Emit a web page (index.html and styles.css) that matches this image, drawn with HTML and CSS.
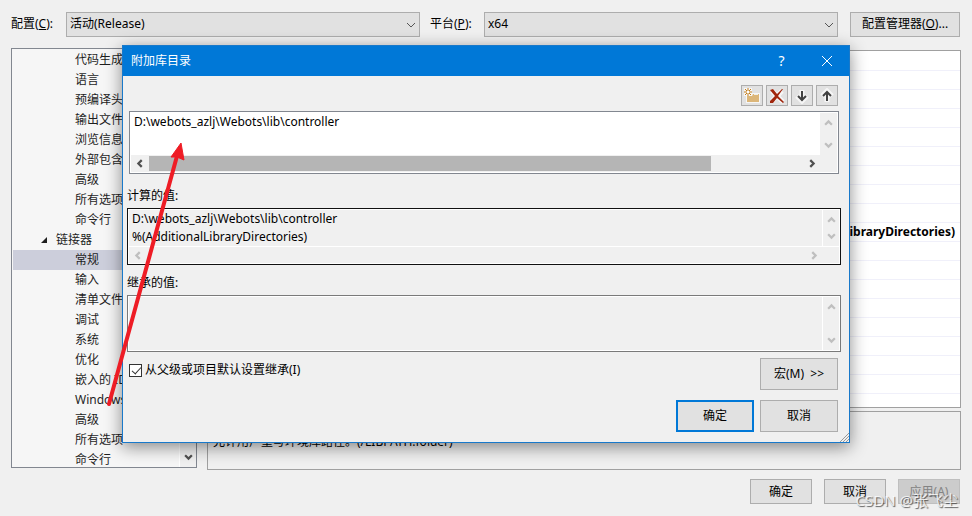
FILE: index.html
```html
<!DOCTYPE html>
<html lang="zh-CN">

<head>
    <meta charset="UTF-8" />
    <title>属性页</title>
    <link rel="stylesheet" href="styles.css">
</head>

<body>
    <header class="config-bar">
        <label class="config-label" for="config">配置(<u>C</u>):</label>
        <div class="select-wrap">
            <select id="config">
                <option>活动(Release)</option>
            </select>
            <svg class="chevron" viewBox="0 0 10 6"><path d="M1 1l4 4 4-4" /></svg>
        </div>
        <label class="platform-label" for="platform">平台(<u>P</u>):</label>
        <div class="select-wrap">
            <select id="platform">
                <option>x64</option>
            </select>
            <svg class="chevron" viewBox="0 0 10 6"><path d="M1 1l4 4 4-4" /></svg>
        </div>
        <button class="manager-btn">配置管理器(<u>O</u>)...</button>
    </header>

    <main class="content">
        <nav class="tree">
            <ul>
                <li>代码生成</li>
                <li>语言</li>
                <li>预编译头</li>
                <li>输出文件</li>
                <li>浏览信息</li>
                <li>外部包含</li>
                <li>高级</li>
                <li>所有选项</li>
                <li>命令行</li>
                <li class="parent"><svg viewBox="0 0 6 6"><path d="M6 0v6H0z" /></svg>链接器</li>
                <li class="selected">常规</li>
                <li>输入</li>
                <li>清单文件</li>
                <li>调试</li>
                <li>系统</li>
                <li>优化</li>
                <li>嵌入的 IDL</li>
                <li>Windows</li>
                <li>高级</li>
                <li>所有选项</li>
                <li>命令行</li>
            </ul>
            <div class="tree-scroll">
                <svg class="arrow dark" viewBox="0 0 8 6"><path d="M1 1l3 3 3-3" /></svg>
            </div>
        </nav>

        <section class="properties">
            <div class="grid">
                <table>
                    <tr><td></td></tr>
                    <tr><td></td></tr>
                    <tr><td></td></tr>
                    <tr><td></td></tr>
                    <tr><td></td></tr>
                    <tr><td></td></tr>
                    <tr><td></td></tr>
                    <tr><td></td></tr>
                    <tr><td></td></tr>
                    <tr><td>%(AdditionalLibraryDirectories)</td></tr>
                    <tr><td></td></tr>
                    <tr><td></td></tr>
                    <tr><td></td></tr>
                    <tr><td></td></tr>
                    <tr><td></td></tr>
                    <tr><td></td></tr>
                    <tr><td></td></tr>
                    <tr><td></td></tr>
                </table>
            </div>
            <div class="description">允许用户重写环境库路径。(/LIBPATH:folder)</div>
        </section>
    </main>

    <footer class="page-buttons">
        <button>确定</button>
        <button>取消</button>
        <button disabled>应用(A)</button>
    </footer>

    <div class="dialog" role="dialog" aria-labelledby="dialog-title">
        <div class="title-bar">
            <span id="dialog-title">附加库目录</span>
            <button aria-label="帮助">?</button>
            <button aria-label="关闭">
                <svg width="12" height="12" viewBox="0 0 12 12"><path d="M1 1l10 10M11 1L1 11" /></svg>
            </button>
        </div>

        <div class="dialog-body">
            <div class="toolbar">
                <button aria-label="新行">
                    <svg width="16" height="16" viewBox="0 0 16 16">
                        <path class="halo" d="M0 0h8v5h8v10H2V8H0z" />
                        <path fill="#dcb679" d="M3 8h5l1-2h6v8H3z" />
                        <path fill="#f0efe8" d="M10 6h4v1h-4z" />
                        <path stroke="#c27d1a" d="M4 0v8M0 4h8M1 1l6 6M7 1L1 7" />
                        <path fill="#fff" d="M3 3h2v2H3z" />
                    </svg>
                </button>
                <button aria-label="删除">
                    <svg width="16" height="16" viewBox="0 0 16 16">
                        <path stroke="#f6f6f6" stroke-width="5" d="M3 3l11 11M13 3L3 13" />
                        <path fill="#a1260d" d="M1 2l3-1 4 5 5-5h1L9 8l6 6-1 1-6-5-4 5H1v-2l5-5z" />
                    </svg>
                </button>
                <button aria-label="下移">
                    <svg width="16" height="16" viewBox="0 0 16 16">
                        <path stroke="#f6f6f6" stroke-width="5" d="M8 2v11M3 8l5 5 5-5" />
                        <path stroke="#424242" stroke-width="2" d="M8 3v9M4 8l4 4 4-4" />
                    </svg>
                </button>
                <button aria-label="上移">
                    <svg width="16" height="16" viewBox="0 0 16 16">
                        <path stroke="#f6f6f6" stroke-width="5" d="M8 14V3M3 8l5-5 5 5" />
                        <path stroke="#424242" stroke-width="2" d="M8 13V4M4 8l4-4 4 4" />
                    </svg>
                </button>
            </div>

            <div class="box editable">
                <textarea aria-label="附加库目录" wrap="off">D:\webots_azlj\Webots\lib\controller</textarea>
                <div class="v-scroll">
                    <svg class="arrow" viewBox="0 0 8 6"><path d="M1 5l3-3 3 3" /></svg>
                    <svg class="arrow" viewBox="0 0 8 6"><path d="M1 1l3 3 3-3" /></svg>
                </div>
                <div class="h-scroll">
                    <svg class="arrow-h dark" viewBox="0 0 6 8"><path d="M5 1L2 4l3 3" /></svg>
                    <div class="track"><div class="thumb"></div></div>
                    <svg class="arrow-h dark" viewBox="0 0 6 8"><path d="M1 1l3 3-3 3" /></svg>
                </div>
            </div>

            <label class="box-label" for="computed">计算的值:</label>
            <div class="box computed">
                <textarea id="computed" wrap="off" readonly>D:\webots_azlj\Webots\lib\controller
%(AdditionalLibraryDirectories)</textarea>
                <div class="v-scroll">
                    <svg class="arrow" viewBox="0 0 8 6"><path d="M1 5l3-3 3 3" /></svg>
                    <svg class="arrow" viewBox="0 0 8 6"><path d="M1 1l3 3 3-3" /></svg>
                </div>
                <div class="h-scroll">
                    <svg class="arrow-h" viewBox="0 0 6 8"><path d="M5 1L2 4l3 3" /></svg>
                    <div class="track"></div>
                    <svg class="arrow-h" viewBox="0 0 6 8"><path d="M1 1l3 3-3 3" /></svg>
                </div>
            </div>

            <label class="box-label" for="inherited">继承的值:</label>
            <div class="box inherited">
                <textarea id="inherited" readonly></textarea>
                <div class="v-scroll">
                    <svg class="arrow" viewBox="0 0 8 6"><path d="M1 5l3-3 3 3" /></svg>
                    <svg class="arrow" viewBox="0 0 8 6"><path d="M1 1l3 3 3-3" /></svg>
                </div>
            </div>

            <div class="options">
                <label class="check"><input type="checkbox" checked>从父级或项目默认设置继承(I)</label>
                <button>宏(M)&nbsp; &gt;&gt;</button>
            </div>
            <div class="dialog-buttons">
                <button class="default">确定</button>
                <button>取消</button>
            </div>
        </div>
        <svg class="grip" viewBox="0 0 9 9"><path d="M0 9l9-9M3 9l6-6M6 9l3-3" /></svg>
    </div>

    <svg class="pointer" width="90" height="270" viewBox="0 0 90 270">
        <path class="shaft" d="M9 264L77 16" />
        <path class="head" d="M81 3L84 20L77 17L71 17z" />
    </svg>
    <div class="watermark">CSDN @张飞尘</div>
</body>

</html>
```

FILE: styles.css
```css
* {
    box-sizing: border-box;
}

body {
    background-color: #f0f0f0;
    color: #000;
    display: flex;
    flex-direction: column;
    font-family: "Noto Sans", "Noto Sans CJK SC", sans-serif;
    font-size: 12px;
    height: 100vh;
    line-height: 20px;
    margin: 0;
    overflow: hidden;
    padding: 11px 12px 12px 11px;
    position: relative;
}

button,
select,
textarea {
    color: inherit;
    font: inherit;
}

button {
    background-color: #e1e1e1;
    border: 1px solid #adadad;
    padding: 0;
}

svg {
    display: block;
    fill: none;
}

/* configuration and platform */
.config-bar {
    align-items: center;
    display: flex;
    height: 26px;
}

.config-label {
    width: 55px;
}

.platform-label {
    margin-left: 10px;
    width: 54px;
}

.select-wrap {
    flex: 1;
    position: relative;
}

.select-wrap select {
    appearance: none;
    background-color: #e1e1e1;
    border: 1px solid #adadad;
    border-radius: 0;
    display: block;
    height: 25px;
    padding: 0 3px;
    width: 100%;
}

.chevron {
    height: 6px;
    position: absolute;
    right: 4px;
    stroke: #555;
    top: 10px;
    width: 10px;
}

.manager-btn {
    height: 25px;
    margin-left: 12px;
    width: 110px;
}

/* tree and property grid */
.content {
    display: flex;
    flex: 1;
    gap: 10px;
    margin-top: 11px;
    min-height: 0;
}

.tree {
    background-color: #f6f6f6;
    border: 1px solid #828790;
    display: flex;
    margin-bottom: 2px;
    overflow: hidden;
    padding: 1px 0 0 1px;
    width: 186px;
}

.tree ul {
    flex: 1;
    list-style: none;
    margin: 0;
    padding: 0;
}

.tree li {
    color: #1e1e1e;
    height: 20px;
    padding-left: 62px;
    white-space: nowrap;
}

.tree li.parent {
    align-items: center;
    display: flex;
    gap: 9px;
    padding-left: 28px;
}

.parent svg {
    fill: #1e1e1e;
    height: 6px;
    width: 6px;
}

.tree li.selected {
    background-color: #cccedb;
}

.tree-scroll {
    align-items: flex-end;
    background-color: #f0f0f0;
    border-left: 1px solid #fff;
    display: flex;
    justify-content: center;
    padding-bottom: 6px;
    width: 17px;
}

.properties {
    display: flex;
    flex: 1;
    flex-direction: column;
    gap: 3px;
    margin: 2px -1px 0 0;
    min-width: 0;
}

.grid {
    background-color: #fff;
    border: 1px solid #a0a0a0;
    flex: 1;
    min-height: 0;
    overflow: hidden;
}

.grid table {
    border-collapse: collapse;
    width: 100%;
}

.grid td {
    border-bottom: 1px solid #f0f0fa;
    font-weight: bold;
    height: 19px;
    line-height: 18px;
    padding: 0 5px;
    text-align: right;
}

.description {
    border: 1px solid #a0a0a0;
    height: 59px;
    padding: 20px 5px 0;
}

.page-buttons {
    display: flex;
    gap: 12px;
    justify-content: flex-end;
    margin-top: 9px;
}

.page-buttons button {
    height: 25px;
    width: 62px;
}

.page-buttons button:disabled {
    background-color: #ccc;
    border-color: #bfbfbf;
    color: #838383;
}

/* dialog */
.dialog {
    background-color: #f0f0f0;
    border: 1px solid #1979ca;
    box-shadow: 0 4px 16px rgba(0, 0, 0, 0.45);
    left: 122px;
    position: absolute;
    right: 122px;
    top: 45px;
}

.title-bar {
    align-items: center;
    background-color: #0078d7;
    color: #fff;
    display: flex;
    height: 30px;
    padding-left: 8px;
}

.title-bar span {
    flex: 1;
}

.title-bar button {
    align-items: center;
    background: none;
    border: 0;
    display: flex;
    font-size: 14px;
    height: 30px;
    justify-content: center;
    width: 45px;
}

.title-bar svg {
    stroke: #fff;
}

.dialog-body {
    padding: 9px 11px 10px 6px;
}

.toolbar {
    display: flex;
    gap: 3px;
    justify-content: flex-end;
    margin-bottom: 5px;
}

.toolbar button {
    align-items: center;
    display: flex;
    height: 21px;
    justify-content: center;
    width: 22px;
}

.halo {
    fill: #f6f6f6;
}

.box {
    border: 1px solid #7a7a7a;
    display: grid;
    grid-template-columns: 1fr 17px;
    padding: 1px;
}

.box textarea {
    background: none;
    border: 0;
    display: block;
    line-height: 18px;
    outline: 0;
    overflow: hidden;
    padding: 0 3px;
    resize: none;
    width: 100%;
}

.editable {
    background-color: #fff;
    border-color: #828790;
    margin-right: -1px;
}

.editable textarea {
    height: 42px;
}

.computed,
.inherited {
    box-shadow: inset 0 0 0 1px #fff;
    margin: 0 -3px 0 -2px;
}

.computed {
    border-color: #111;
}

.computed textarea {
    height: 36px;
}

.inherited textarea {
    height: 53px;
}

.v-scroll {
    align-items: center;
    background-color: #f0f0f0;
    display: flex;
    flex-direction: column;
    justify-content: space-between;
    padding: 6px 0;
}

.computed .v-scroll,
.inherited .v-scroll {
    border-left: 1px solid #fff;
}

.h-scroll {
    align-items: center;
    background-color: #f0f0f0;
    display: flex;
    grid-column: 1 / 3;
    height: 17px;
    padding: 0 21px 0 5px;
}

.computed .h-scroll {
    border-top: 1px solid #fff;
}

.track {
    flex: 1;
    margin: 0 6px;
}

.thumb {
    background-color: #b5b5b5;
    height: 15px;
    width: 86%;
}

.arrow {
    height: 7px;
    width: 9px;
}

.arrow-h {
    height: 9px;
    width: 7px;
}

.arrow,
.arrow-h {
    stroke: #bfbfbf;
    stroke-width: 2;
}

.arrow.dark,
.arrow-h.dark {
    stroke: #505050;
}

.box-label {
    display: block;
    margin: 12px 0 2px -2px;
}

.computed + .box-label {
    margin-top: 8px;
}

.options {
    align-items: flex-start;
    display: flex;
    justify-content: space-between;
    margin-top: 6px;
}

.check {
    align-items: center;
    display: flex;
    gap: 3px;
    margin-top: 2px;
}

.check input {
    appearance: none;
    background-color: #fff;
    border: 1px solid #333;
    height: 13px;
    margin: 0;
    position: relative;
    width: 13px;
}

.check input:checked::after {
    border: solid #333;
    border-width: 0 1px 1px 0;
    content: "";
    height: 8px;
    left: 4px;
    position: absolute;
    top: 0;
    transform: rotate(42deg);
    width: 4px;
}

.dialog-buttons {
    display: flex;
    gap: 6px;
    justify-content: flex-end;
    margin-top: 10px;
}

.options button,
.dialog-buttons button {
    height: 32px;
    width: 78px;
}

.dialog-buttons .default {
    border: 2px solid #0078d7;
}

.grip {
    bottom: 0;
    height: 9px;
    position: absolute;
    right: 0;
    stroke: #999;
    width: 9px;
}

/* annotation arrow */
.pointer {
    left: 100px;
    pointer-events: none;
    position: absolute;
    top: 140px;
}

.shaft {
    stroke: #ee1c25;
    stroke-linecap: round;
    stroke-width: 4;
}

.head {
    fill: #ee1c25;
    stroke: #ee1c25;
}

.watermark {
    bottom: 6px;
    color: rgba(255, 255, 255, 0.8);
    font-size: 15px;
    position: absolute;
    right: 14px;
    text-shadow: 1px 1px 1px rgba(0, 0, 0, 0.6);
}
```
